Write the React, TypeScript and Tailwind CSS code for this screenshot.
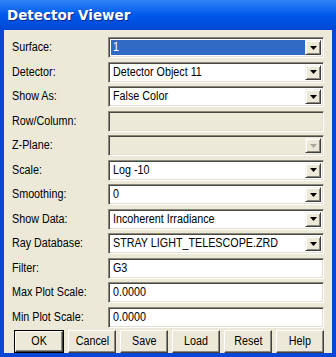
import React from "react";

const sunken =
  "border border-t-[#8a877c] border-l-[#8a877c] border-r-white border-b-white shadow-[inset_1px_1px_#4a4842,inset_-1px_-1px_#e2dfd2]";

// narrow text: the dialog font is a condensed sans, emulate with a horizontal squeeze
function T({ children, center }: { children?: React.ReactNode; center?: boolean }) {
  return (
    <span
      className={`inline-block whitespace-nowrap leading-none scale-x-[0.86] ${
        center ? "origin-center" : "origin-left"
      }`}
    >
      {children}
    </span>
  );
}

function Arrow({ disabled }: { disabled?: boolean }) {
  return (
    <svg width="7" height="4" viewBox="0 0 7 4">
      <path d="M0 0h7L3.5 4z" fill={disabled ? "#a9a79c" : "#000"} />
    </svg>
  );
}

function DropButton({ disabled }: { disabled?: boolean }) {
  return (
    <div className="w-[16px] h-full flex items-center justify-center bg-[#ece9d8] border border-t-[#f4f2ea] border-l-[#f4f2ea] border-r-[#404040] border-b-[#404040] shadow-[inset_1px_1px_white,inset_-1px_-1px_#8a877c]">
      <Arrow disabled={disabled} />
    </div>
  );
}

function Combo({
  value,
  selected,
  disabled,
}: {
  value?: string;
  selected?: boolean;
  disabled?: boolean;
}) {
  return (
    <div
      className={`flex h-full w-full p-[2px] ${sunken} ${
        disabled ? "bg-[#ece9d8]" : "bg-white"
      }`}
    >
      <div
        className={`flex-1 flex items-center pl-[2px] ${
          selected ? "bg-[#316ac5] text-white" : ""
        }`}
      >
        <T>{value}</T>
      </div>
      <DropButton disabled={disabled} />
    </div>
  );
}

function Field({ value, disabled }: { value?: string; disabled?: boolean }) {
  return (
    <div
      className={`flex h-full w-full items-center pl-[4px] ${sunken} ${
        disabled ? "bg-[#ece9d8]" : "bg-white"
      }`}
    >
      <T>{value}</T>
    </div>
  );
}

const rows: { label: string; control: React.ReactNode }[] = [
  { label: "Surface:", control: <Combo value="1" selected /> },
  { label: "Detector:", control: <Combo value="Detector Object 11" /> },
  { label: "Show As:", control: <Combo value="False Color" /> },
  { label: "Row/Column:", control: <Field disabled /> },
  { label: "Z-Plane:", control: <Combo disabled /> },
  { label: "Scale:", control: <Combo value="Log -10" /> },
  { label: "Smoothing:", control: <Combo value="0" /> },
  { label: "Show Data:", control: <Combo value="Incoherent Irradiance" /> },
  { label: "Ray Database:", control: <Combo value="STRAY LIGHT_TELESCOPE.ZRD" /> },
  { label: "Filter:", control: <Field value="G3" /> },
  { label: "Max Plot Scale:", control: <Field value="0.0000" /> },
  { label: "Min Plot Scale:", control: <Field value="0.0000" /> },
];

const buttons = ["OK", "Cancel", "Save", "Load", "Reset", "Help"];

export default function App() {
  return (
    <div className="w-[336px] h-[357px] flex flex-col bg-[#0a46d6] font-['Liberation_Sans',Arial,sans-serif] text-[12.5px] text-black">
      <div className="h-[30px] shrink-0 flex items-center pl-[7px] bg-gradient-to-b from-[#2f83f5] via-[#0058ec] to-[#0047d4]">
        <span className="font-['DejaVu_Sans',sans-serif] font-bold text-[13.5px] text-white [text-shadow:1px_1px_#0a2a8c]">
          Detector Viewer
        </span>
      </div>
      <div className="flex-1 mx-[4px] mb-[5px] bg-[#ece9d8] flex flex-col pt-[7px] pl-[8px] pr-[8px]">
        <div className="flex flex-col gap-[3.5px]">
          {rows.map((r) => (
            <div key={r.label} className="flex items-center h-[21px]">
              <div className="w-[96px]">
                <T>{r.label}</T>
              </div>
              <div className="flex-1 h-full">{r.control}</div>
            </div>
          ))}
        </div>
        <div className="flex gap-[4px] mt-[2px] pl-[2px] h-[23px]">
          {buttons.map((b) => (
            <div
              key={b}
              className={`flex-1 ${b === "OK" ? "border border-black" : ""}`}
            >
              <div className="h-full flex items-center justify-center bg-[#ece9d8] border border-t-white border-l-white border-r-[#404040] border-b-[#404040] shadow-[inset_-1px_-1px_#8a877c]">
                <T center>{b}</T>
              </div>
            </div>
          ))}
        </div>
      </div>
    </div>
  );
}
